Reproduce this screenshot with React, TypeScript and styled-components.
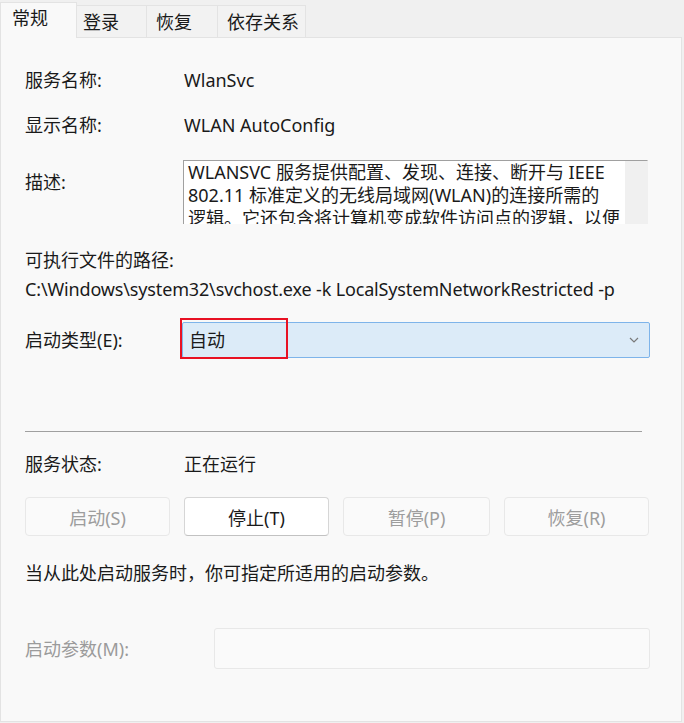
import React from 'react'
import styled, { createGlobalStyle } from 'styled-components'

const GlobalStyle = createGlobalStyle`
  html, body {
    margin: 0;
    padding: 0;
    background: #f0f0f0;
  }
  body {
    font-family: "Noto Sans", "Noto Sans CJK SC", sans-serif;
    font-size: 18px;
    color: #1a1a1a;
  }
`

const Window = styled.div`
  width: 684px;
  height: 723px;
  display: flex;
  flex-direction: column;
  overflow: hidden;
`

const TabStrip = styled.div`
  display: flex;
  align-items: flex-end;
  height: 37px;
  flex-shrink: 0;
  position: relative;
  z-index: 1;
`

const Tab = styled.div<{ $active?: boolean; $w: number; $pl: number }>`
  box-sizing: border-box;
  width: ${p => p.$w}px;
  padding-left: ${p => p.$pl}px;
  height: ${p => (p.$active ? 36 : 32)}px;
  padding-top: ${p => (p.$active ? 3 : 4)}px;
  margin-bottom: ${p => (p.$active ? -1 : 0)}px;
  line-height: 24px;
  background: ${p => (p.$active ? '#f9f9f9' : '#f2f2f2')};
  border: 1px solid #e3e3e3;
  border-bottom: none;
  border-left: ${p => (p.$active ? '1px solid #e3e3e3' : 'none')};
`

const Panel = styled.div`
  box-sizing: border-box;
  width: 682px;
  flex: 1;
  margin-bottom: 1px;
  background: #f9f9f9;
  border: 1px solid #e3e3e3;
  padding: 0 31px 0 24px;
  display: flex;
  flex-direction: column;
`

const Row = styled.div<{ $label?: number; $mt: number; $top?: boolean }>`
  display: grid;
  grid-template-columns: ${p => p.$label ?? 157}px 1fr;
  align-items: ${p => (p.$top ? 'start' : 'center')};
  margin-top: ${p => p.$mt}px;
  line-height: 24px;
`

const Label = styled.div<{ $dim?: boolean; $pt?: number }>`
  color: ${p => (p.$dim ? '#9b9b9b' : '#1a1a1a')};
  padding-top: ${p => p.$pt ?? 0}px;
  white-space: nowrap;
`

const Value = styled.div`
  padding-left: 2px;
  white-space: nowrap;
`

const DescBox = styled.div`
  box-sizing: border-box;
  height: 64px;
  margin: 0 2px 0 1px;
  display: flex;
  background: #ffffff;
  border-top: 1px solid #a0a0a0;
  border-left: 1px solid #a0a0a0;
  border-right: 1px solid #f0f0f0;
  overflow: hidden;
`

const DescText = styled.div`
  flex: 1;
  padding: 0 4px;
  line-height: 23px;
  overflow: hidden;
`

const DescLine = styled.div`
  white-space: nowrap;
`

const ScrollTrack = styled.div`
  width: 22px;
  background: #f0f0f0;
`

const Block = styled.div<{ $mt: number; $tight?: boolean }>`
  margin-top: ${p => p.$mt}px;
  line-height: 24px;
  white-space: nowrap;
  letter-spacing: ${p => (p.$tight ? '-0.15px' : 'normal')};
`

const Combo = styled.div`
  position: relative;
  box-sizing: border-box;
  height: 36px;
  display: flex;
  align-items: center;
  justify-content: space-between;
  padding: 0 10px 0 6px;
  background: #dcebf8;
  border: 1px solid #7eb4ea;
  border-radius: 2px;
`

const RedMark = styled.div`
  position: absolute;
  left: -3px;
  top: -5px;
  width: 108px;
  height: 41px;
  box-sizing: border-box;
  border: 2px solid #e81123;
  pointer-events: none;
`

const Separator = styled.div`
  margin: 73px 8px 0 0;
  height: 1px;
  background: #a0a0a0;
`

const ButtonRow = styled.div`
  display: grid;
  grid-template-columns: 145px 145px 147px 145px;
  justify-content: space-between;
  margin: 21px 1px 0 0;
`

const Button = styled.div<{ $disabled?: boolean }>`
  box-sizing: border-box;
  height: 39px;
  display: flex;
  align-items: center;
  justify-content: center;
  border-radius: 4px;
  background: ${p => (p.$disabled ? '#fafafa' : '#ffffff')};
  color: ${p => (p.$disabled ? '#9d9d9d' : '#1a1a1a')};
  border: 1px solid ${p => (p.$disabled ? '#e8e8e8' : '#d6d6d6')};
  border-bottom-color: ${p => (p.$disabled ? '#e8e8e8' : '#c2c2c2')};
`

const ParamInput = styled.div`
  box-sizing: border-box;
  height: 41px;
  background: #fafafa;
  border: 1px solid #e8e8e8;
  border-radius: 3px;
`

const Chevron = () => (
  <svg width="10" height="6" viewBox="0 0 10 6">
    <polyline points="1,1 5,5 9,1" fill="none" stroke="#7a7a7a" strokeWidth="1.2" />
  </svg>
)

const tabs = [
  { name: '常规', w: 77, pl: 11, active: true },
  { name: '登录', w: 70, pl: 6 },
  { name: '恢复', w: 71, pl: 9 },
  { name: '依存关系', w: 88, pl: 9 },
]

const buttons = [
  { text: '启动(S)', disabled: true },
  { text: '停止(T)', disabled: false },
  { text: '暂停(P)', disabled: true },
  { text: '恢复(R)', disabled: true },
]

const App = () => {
  return (
    <Window>
      <GlobalStyle />
      <TabStrip>
        {tabs.map(t => (
          <Tab key={t.name} $active={t.active} $w={t.w} $pl={t.pl}>{t.name}</Tab>
        ))}
      </TabStrip>
      <Panel>
        <Row $mt={30}>
          <Label>服务名称:</Label>
          <Value>WlanSvc</Value>
        </Row>
        <Row $mt={21}>
          <Label>显示名称:</Label>
          <Value>WLAN AutoConfig</Value>
        </Row>
        <Row $mt={23} $top>
          <Label $pt={10}>描述:</Label>
          <DescBox>
            <DescText>
              <DescLine>WLANSVC 服务提供配置、发现、连接、断开与 IEEE</DescLine>
              <DescLine>802.11 标准定义的无线局域网(WLAN)的连接所需的</DescLine>
              <DescLine>逻辑。它还包含将计算机变成软件访问点的逻辑，以便</DescLine>
              <DescLine>其他设备或计算机可以使用支持它的 WLAN 适配器无线</DescLine>
            </DescText>
            <ScrollTrack />
          </DescBox>
        </Row>
        <Block $mt={24}>可执行文件的路径:</Block>
        <Block $mt={5} $tight>C:\Windows\system32\svchost.exe -k LocalSystemNetworkRestricted -p</Block>
        <Row $mt={21}>
          <Label>启动类型(E):</Label>
          <Combo>
            <span>自动</span>
            <Chevron />
            <RedMark />
          </Combo>
        </Row>
        <Separator />
        <Row $mt={20}>
          <Label>服务状态:</Label>
          <Value>正在运行</Value>
        </Row>
        <ButtonRow>
          {buttons.map(b => (
            <Button key={b.text} $disabled={b.disabled}>{b.text}</Button>
          ))}
        </ButtonRow>
        <Block $mt={25}>当从此处启动服务时，你可指定所适用的启动参数。</Block>
        <Row $mt={43} $label={189}>
          <Label $dim>启动参数(M):</Label>
          <ParamInput />
        </Row>
      </Panel>
    </Window>
  )
}

export default App
